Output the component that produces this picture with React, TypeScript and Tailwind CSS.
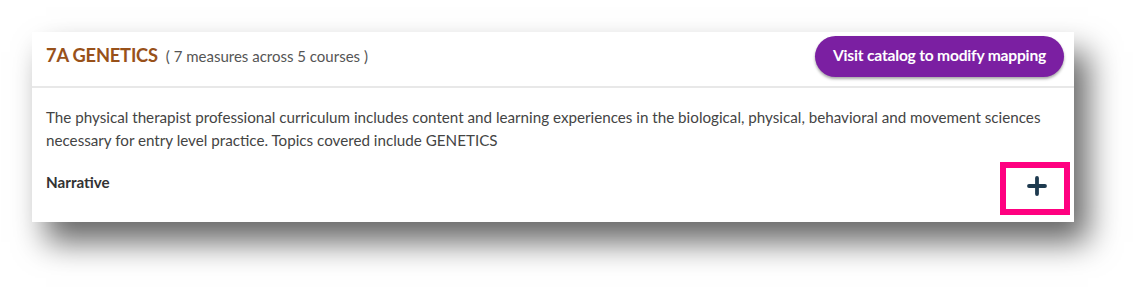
import React from "react";

export default function App() {
  return (
    <div className="w-[1145px] h-[297px] bg-white pt-[32px] pl-[32px] relative" style={{ fontFamily: "Lato, 'Noto Sans', sans-serif" }}>
      <div className="w-[1042px] h-[190px] bg-white shadow-[14px_20px_30px_rgba(0,0,0,0.6)] flex flex-col relative">
        <div className="h-[56px] flex items-center justify-between pl-[14px] pr-[10px] pb-[6px] border-b-2 border-[#e8e8e8]">
          <div className="flex items-baseline gap-[8px]">
            <span className="text-[18.3px] font-bold text-[#98511a] tracking-[-0.2px]">7A GENETICS</span>
            <span className="text-[15px] text-[#555]">( 7 measures across 5 courses )</span>
          </div>
          <button className="h-[41px] w-[249px] rounded-full bg-[#7b1fa2] text-white text-[15.6px] font-bold shadow-[0_2px_3px_rgba(0,0,0,0.35)] tracking-[-0.2px]">
            Visit catalog to modify mapping
          </button>
        </div>
        <div className="px-[14px] pt-[18px] text-[15.2px] leading-[23px] text-[#444]">
          <p>
            The physical therapist professional curriculum includes content and learning experiences in the biological, physical, behavioral and movement sciences necessary for entry level practice. Topics covered include GENETICS
          </p>
          <p className="mt-[19px] font-bold text-[#333]">Narrative</p>
        </div>
        <div className="absolute left-[968px] top-[130px] w-[70px] h-[53px] border-[6px] border-[#ff0080] flex items-center justify-center pb-[6px] pl-[4px]">
          <svg width="20" height="20" viewBox="0 0 20 20">
            <path d="M10 2v16M2 10h16" stroke="#1e3a4f" strokeWidth="3.8" strokeLinecap="round" />
          </svg>
        </div>
      </div>
    </div>
  );
}
